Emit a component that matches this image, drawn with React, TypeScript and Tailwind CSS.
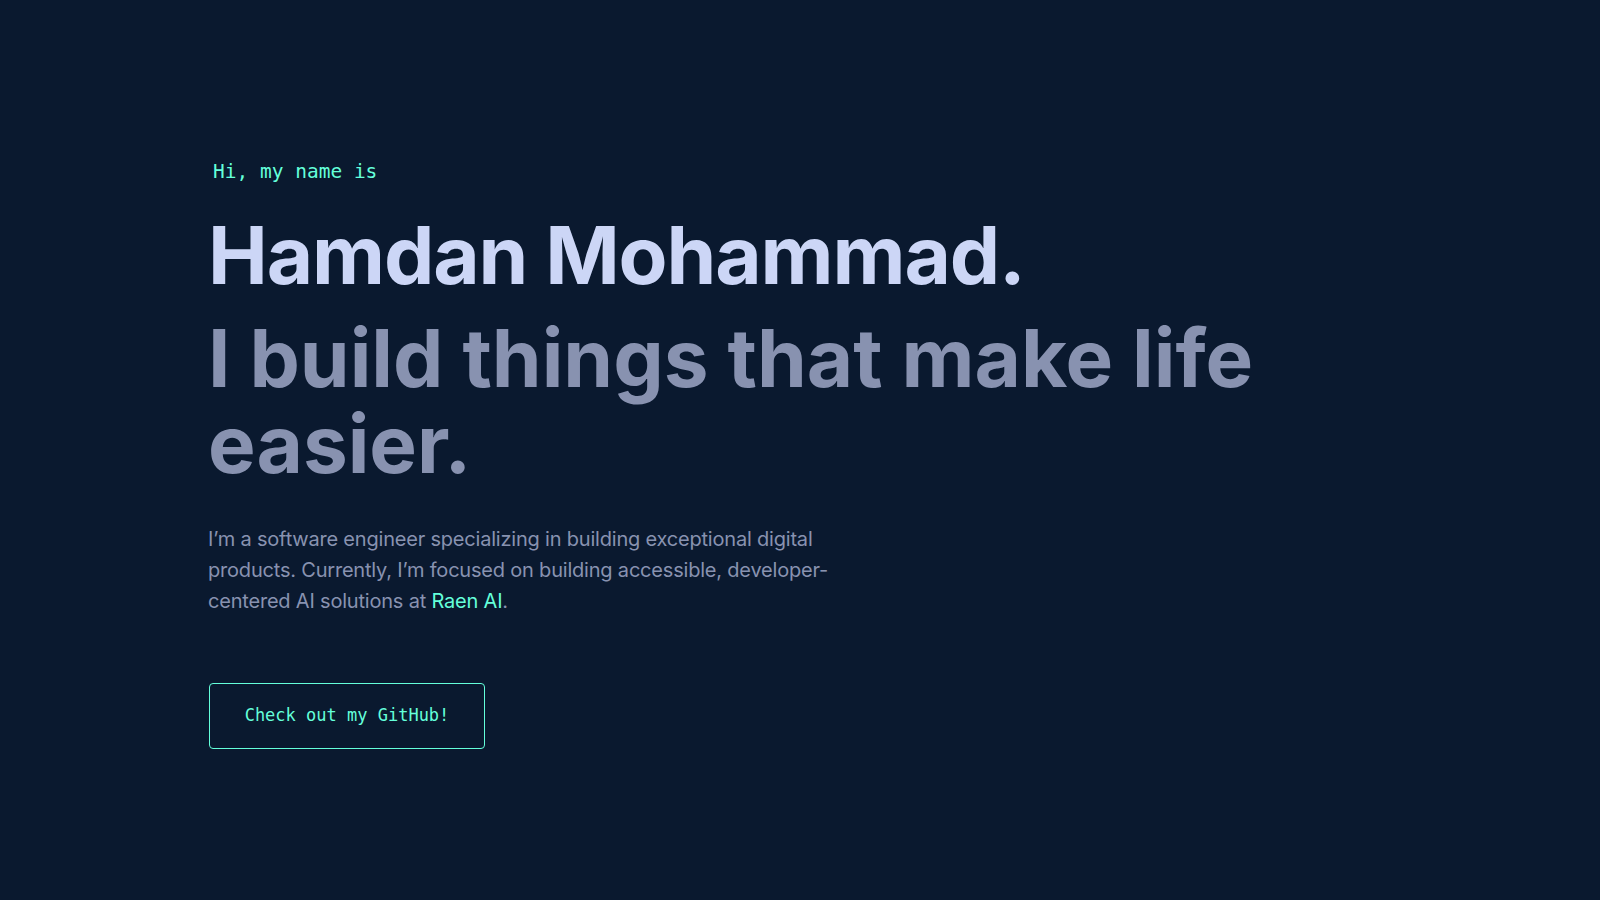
import React from "react";

export default function App() {
  const sans = "font-['Inter','Noto_Sans',sans-serif]";
  const mono = "font-['DejaVu_Sans_Mono','Liberation_Mono',monospace]";
  return (
    <main className="min-h-screen w-full bg-[#0a192f] pl-[208px] pt-[160px]">
      <section className="flex flex-col items-start">
        <h1 className={`${mono} ml-[5px] text-[19.5px] leading-[24px] text-[#64ffda]`}>Hi, my name is</h1>
        <h2 className={`${sans} mt-[27px] text-[80px] font-bold leading-[88px] tracking-[-1.1px] text-[#ccd6f6]`}>
          Hamdan Mohammad.
        </h2>
        <h3 className={`${sans} mt-[16px] w-[1100px] text-[80px] font-bold leading-[86px] tracking-[0px] text-[#8892b0]`}>
          I build things that make life easier.
        </h3>
        <p className={`${sans} mt-[37px] w-[630px] text-[20px] leading-[31px] tracking-[-0.2px] text-[#8892b0]`}>
          I’m a software engineer specializing in building exceptional digital products. Currently, I’m focused on
          building accessible, developer-centered AI solutions at{" "}
          <a href="#" className="text-[#64ffda]">Raen AI</a>.
        </p>
        <a
          href="#"
          className={`${mono} ml-[1px] mt-[66px] flex h-[66px] w-[276px] items-center justify-center rounded-[4px] border border-[#64ffda] text-[17px] text-[#64ffda]`}
        >
          Check out my GitHub!
        </a>
      </section>
    </main>
  );
}
